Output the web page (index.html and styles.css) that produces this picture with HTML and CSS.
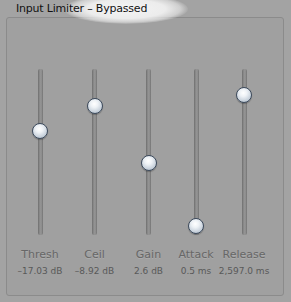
FILE: index.html
```html
<!DOCTYPE html>
<html lang="en">
<head>
    <meta charset="UTF-8">
    <title>Input Limiter</title>
    <link rel="stylesheet" href="styles.css">
</head>
<body>
    <div class="title">
        <span class="glow"></span>
        <span class="title-text">Input Limiter – Bypassed</span>
    </div>
    <div class="panel">
        <div class="sliders">
            <div class="col">
                <div class="slider"><div class="track"></div><div class="thumb" style="top:54px"></div></div>
                <div class="label">Thresh</div>
                <div class="value">–17.03 dB</div>
            </div>
            <div class="col">
                <div class="slider"><div class="track"></div><div class="thumb" style="top:29px"></div></div>
                <div class="label">Ceil</div>
                <div class="value">–8.92 dB</div>
            </div>
            <div class="col">
                <div class="slider"><div class="track"></div><div class="thumb" style="top:86px"></div></div>
                <div class="label">Gain</div>
                <div class="value">2.6 dB</div>
            </div>
            <div class="col">
                <div class="slider"><div class="track"></div><div class="thumb" style="top:149px"></div></div>
                <div class="label">Attack</div>
                <div class="value">0.5 ms</div>
            </div>
            <div class="col">
                <div class="slider"><div class="track"></div><div class="thumb" style="top:18px"></div></div>
                <div class="label">Release</div>
                <div class="value">2,597.0 ms</div>
            </div>
        </div>
    </div>
</body>
</html>
```

FILE: styles.css
```css
body{
    margin: 0;
    background-color: #a3a3a3;
    font-family: "DejaVu Sans", sans-serif;
    width: 291px;
    height: 302px;
    overflow: hidden;
}

.title{
    position: relative;
    height: 16px;
    padding-top: 1px;
    padding-left: 16px;
    line-height: 16px;
    font-size: 11px;
    letter-spacing: -0.2px;
    color: #111;
}

.glow{
    position: absolute;
    left: 64px;
    top: -6px;
    width: 124px;
    height: 30px;
    border-radius: 50%;
    background: radial-gradient(ellipse at center, #f4f4f4 0%, #ececec 45%, rgba(236,236,236,0.6) 62%, rgba(163,163,163,0) 72%);
}

.title-text{
    position: relative;
}

.panel{
    margin-left: 6px;
    width: 276px;
    height: 277px;
    border: 1px solid #8b8b8b;
    border-radius: 3px;
    background-color: #a0a0a0;
}

.sliders{
    display: grid;
    grid-template-columns: 56px 53px 55px 40px 56px;
    padding-left: 5px;
    padding-top: 51px;
}

.col{
    display: flex;
    flex-direction: column;
    align-items: center;
}

.slider{
    position: relative;
    width: 16px;
    height: 166px;
}

.track{
    width: 5px;
    height: 100%;
    margin: 0 auto;
    border-radius: 2px;
    background: linear-gradient(to right, #6e6e6e, #8c8c8c 35%, #979797 60%, #747474);
}

.thumb{
    position: absolute;
    left: 0;
    width: 14px;
    height: 14px;
    border: 1px solid #3c4a5c;
    border-radius: 50%;
    background: radial-gradient(circle at 45% 35%, #ffffff 0%, #eef2f6 30%, #c4ced9 70%, #8e9aa8 100%);
    box-shadow: 0 1px 1px rgba(0,0,0,0.25);
}

.label{
    margin-top: 13px;
    font-size: 11px;
    line-height: 14px;
    color: #676767;
    white-space: nowrap;
    text-shadow: 0 1px 0 rgba(255,255,255,0.15);
}

.value{
    margin-top: 3px;
    font-size: 9px;
    line-height: 12px;
    color: #595959;
    white-space: nowrap;
}
```
